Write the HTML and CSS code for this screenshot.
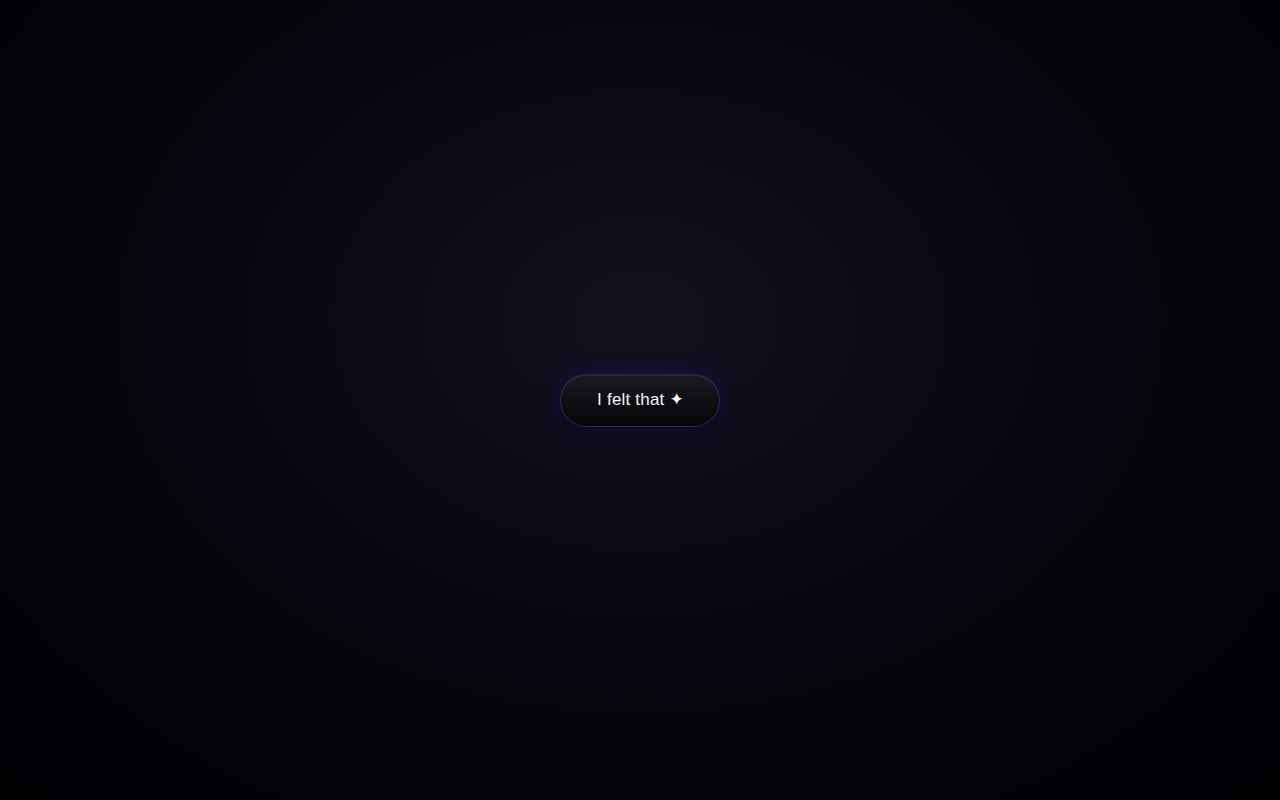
FILE: index.html
```html
<!DOCTYPE html>
<html>
<head>
<meta charset="utf-8">
<link rel="stylesheet" href="styles.css">
</head>
<body>
<main class="stage">
  <button class="felt-btn">I felt that <span class="spark">✦</span></button>
</main>
</body>
</html>
```
FILE: styles.css
```css
html, body {
  margin: 0;
  padding: 0;
  height: 100%;
}
body {
  background: radial-gradient(ellipse farthest-corner at 50% 40%, #15111f 0%, #0f0c1a 20%, #08060f 45%, #040309 70%, #020205 100%);
  font-family: "Liberation Sans", Arial, sans-serif;
}
.stage {
  height: 800px;
  display: flex;
  align-items: center;
  justify-content: center;
}
.felt-btn {
  height: 53px;
  padding: 0 35px 2px 36px;
  border-radius: 27px;
  border: 1px solid rgba(80, 70, 140, 0.45);
  background: linear-gradient(180deg, #1b1a21 0%, #0e0e12 55%, #060608 100%);
  color: #f4f4f8;
  font-family: "Liberation Sans", Arial, sans-serif;
  font-size: 17px;
  letter-spacing: 0.2px;
  box-shadow: 0 0 18px rgba(60, 30, 170, 0.35), 0 4px 12px rgba(0, 0, 0, 0.5), inset 0 1px 0 rgba(255, 255, 255, 0.06);
  cursor: pointer;
}
.spark {
  font-family: "DejaVu Sans", sans-serif;
  font-size: 17px;
  color: #ffffff;
}
```
